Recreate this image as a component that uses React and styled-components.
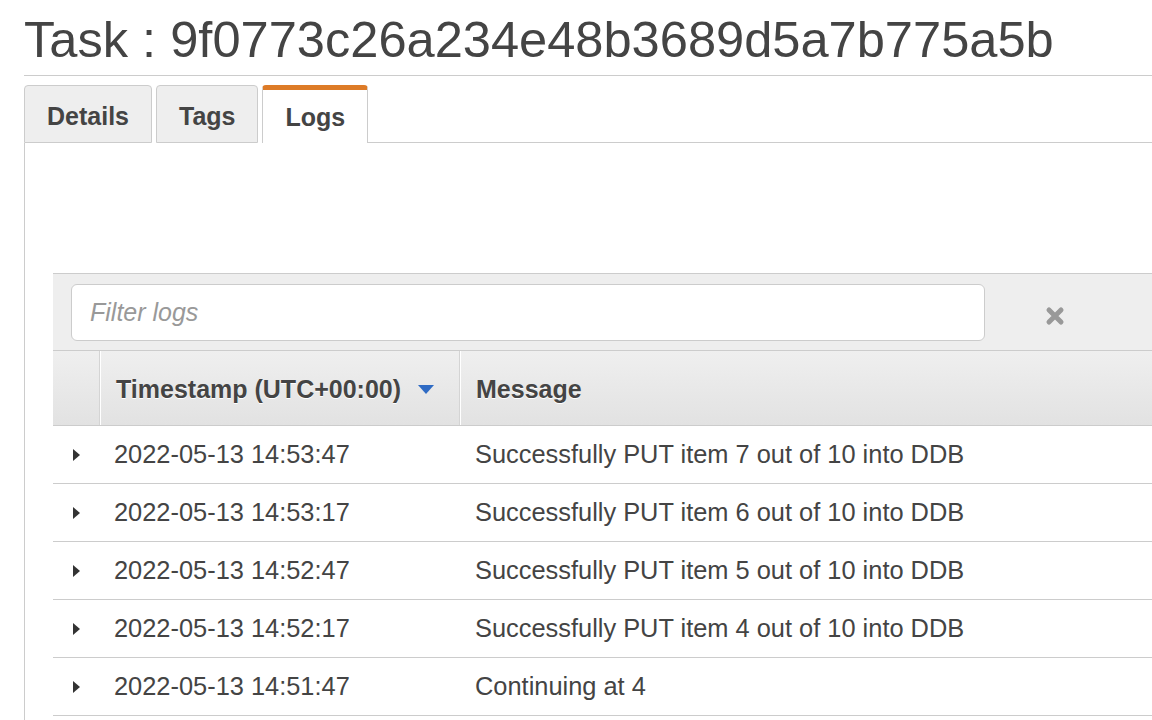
import styled, { createGlobalStyle } from 'styled-components';

const LOGS = [
  { ts: '2022-05-13 14:53:47', msg: 'Successfully PUT item 7 out of 10 into DDB' },
  { ts: '2022-05-13 14:53:17', msg: 'Successfully PUT item 6 out of 10 into DDB' },
  { ts: '2022-05-13 14:52:47', msg: 'Successfully PUT item 5 out of 10 into DDB' },
  { ts: '2022-05-13 14:52:17', msg: 'Successfully PUT item 4 out of 10 into DDB' },
  { ts: '2022-05-13 14:51:47', msg: 'Continuing at 4' },
];

const GlobalStyle = createGlobalStyle`
  html, body {
    margin: 0;
    background: #fff;
    overflow: hidden;
  }
  body {
    font-family: 'Liberation Sans', Arial, sans-serif;
    color: #444;
  }
`;

export default function App() {
  return (
    <>
      <GlobalStyle />
      <Page>
        <Title>Task : 9f0773c26a234e48b3689d5a7b775a5b</Title>
        <TabBar>
          <Tab>Details</Tab>
          <Tab>Tags</Tab>
          <Tab active>Logs</Tab>
          <TabFill />
        </TabBar>
        <Content>
          <LogPanel>
            <FilterBar>
              <FilterInput placeholder="Filter logs" />
              <ClearButton>
                <svg width="20" height="20" viewBox="0 0 20 20">
                  <path d="M4 4 L16 16 M16 4 L4 16" stroke="#999" strokeWidth="5" strokeLinecap="round" />
                </svg>
              </ClearButton>
            </FilterBar>
            <Table>
              <HeaderRow>
                <HeadCell width="47px" />
                <HeadCell width="360px">
                  Timestamp (UTC+00:00)
                  <SortArrow />
                </HeadCell>
                <HeadCell>Message</HeadCell>
              </HeaderRow>
              {LOGS.map(({ ts, msg }) => (
                <Row key={ts}>
                  <Cell width="47px">
                    <Caret />
                  </Cell>
                  <Cell width="360px" pad="14px">{ts}</Cell>
                  <Cell pad="15px">{msg}</Cell>
                </Row>
              ))}
            </Table>
          </LogPanel>
        </Content>
      </Page>
    </>
  );
}

const Page = styled.div`
  width: 1400px;
  padding-left: 24px;
`;
const Title = styled.h1`
  margin: 0;
  padding-top: 10px;
  height: 65px;
  font-size: 50.6px;
  font-weight: 400;
  line-height: 60px;
  color: #444;
  border-bottom: 1px solid #ccc;
  box-sizing: content-box;
`;
const TabBar = styled.div`
  display: flex;
  align-items: flex-end;
  margin-top: 9px;
  height: 58px;
`;
const Tab = styled.div`
  box-sizing: border-box;
  height: 58px;
  padding: ${({ active }) => (active ? '2px 22px 0' : '4px 22px 0')};
  margin-right: 4px;
  display: flex;
  align-items: center;
  font-size: 25px;
  font-weight: 700;
  color: #444;
  background: ${({ active }) => (active ? '#fff' : '#eee')};
  border: 1px solid #ccc;
  border-top: ${({ active }) => (active ? '5px solid #dd7b27' : '1px solid #ccc')};
  border-bottom: ${({ active }) => (active ? 'none' : '1px solid #ccc')};
  border-radius: 4px 4px 0 0;
`;
const TabFill = styled.div`
  flex: 1;
  margin-left: -4px;
  border-bottom: 1px solid #ccc;
`;
const Content = styled.div`
  border-left: 1px solid #ccc;
  padding: 130px 0 0 28px;
  height: 600px;
`;
const LogPanel = styled.div`
  background: #fff;
`;
const FilterBar = styled.div`
  display: flex;
  align-items: center;
  background: #eee;
  border-top: 1px solid #ccc;
  border-bottom: 1px solid #ccc;
  padding: 10px 0 9px 18px;
`;
const FilterInput = styled.input`
  box-sizing: border-box;
  width: 914px;
  height: 57px;
  border: 1px solid #ccc;
  border-radius: 6px;
  padding: 0 18px;
  font-family: 'Liberation Sans', Arial, sans-serif;
  font-size: 25px;
  color: #444;
  background: #fff;
  outline: none;
  &::placeholder {
    color: #999;
    font-style: italic;
  }
`;
const ClearButton = styled.div`
  width: 140px;
  padding-top: 6px;
  display: flex;
  justify-content: center;
  align-items: center;
`;
const Table = styled.div`
  display: flex;
  flex-direction: column;
`;
const HeaderRow = styled.div`
  display: flex;
  height: 74px;
  background: linear-gradient(#efefef, #e2e2e2);
  border-bottom: 1px solid #ccc;
  box-shadow: 0 1px 0 #fff;
`;
const HeadCell = styled.div`
  box-sizing: border-box;
  width: ${({ width }) => width || 'auto'};
  flex: ${({ width }) => (width ? 'none' : '1')};
  display: flex;
  align-items: center;
  padding-left: 16px;
  padding-top: 3px;
  font-size: 25px;
  font-weight: 700;
  color: #444;
  text-shadow: 0 1px 0 #fff;
  border-right: 1px solid #d4d4d4;
  box-shadow: 1px 0 0 #fff;
  &:last-child {
    border-right: none;
    box-shadow: none;
  }
`;
const SortArrow = styled.span`
  margin-left: 17px;
  width: 0;
  height: 0;
  border-left: 8px solid transparent;
  border-right: 8px solid transparent;
  border-top: 9px solid #2f6bc4;
`;
const Row = styled.div`
  display: flex;
  height: 57px;
  border-bottom: 1px solid #ccc;
  background: #fff;
`;
const Cell = styled.div`
  box-sizing: border-box;
  width: ${({ width }) => width || 'auto'};
  flex: ${({ width }) => (width ? 'none' : '1')};
  display: flex;
  align-items: center;
  justify-content: ${({ pad }) => (pad ? 'flex-start' : 'center')};
  padding-left: ${({ pad }) => pad || '0'};
  font-size: 25.4px;
  color: #444;
`;
const Caret = styled.span`
  width: 0;
  height: 0;
  margin-left: -1px;
  border-top: 6px solid transparent;
  border-bottom: 6px solid transparent;
  border-left: 7px solid #333;
`;
